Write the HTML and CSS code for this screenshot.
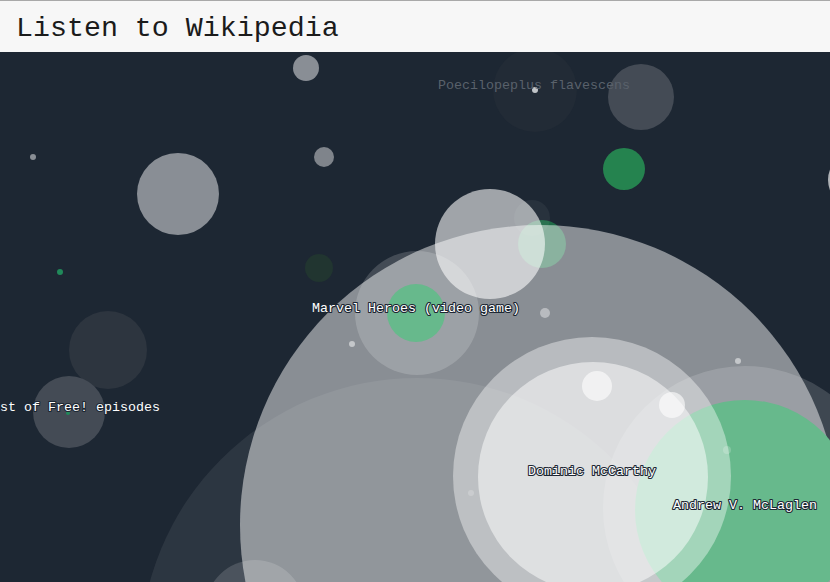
FILE: index.html
```html
<!DOCTYPE html>
<html>
<head>
<meta charset="utf-8">
<title>Listen to Wikipedia</title>
<link rel="stylesheet" href="styles.css">
</head>
<body>
<header class="topbar">
  <h1 class="title">Listen to Wikipedia</h1>
</header>
<main class="canvas">
  <svg class="bubbles" width="830" height="530" viewBox="0 52 830 530" xmlns="http://www.w3.org/2000/svg">
    <!-- faint / dark background circles -->
    <circle cx="535" cy="90" r="42" class="c-faint"/>
    <circle cx="641" cy="97" r="33" class="c-slate"/>
    <circle cx="108" cy="350" r="39" class="c-dim"/>
    <circle cx="69" cy="412" r="36" class="c-slate"/>
    <circle cx="319" cy="268" r="14" class="c-darkgreen"/>
    <circle cx="306" cy="68" r="13" class="c-gray"/>
    <circle cx="324" cy="157" r="10" class="c-gray2"/>
    <circle cx="178" cy="194" r="41" class="c-gray"/>
    <circle cx="33" cy="157" r="3" class="c-gray"/>
    <circle cx="535" cy="90" r="3" class="c-dot"/>
    <circle cx="60" cy="272" r="3" class="c-green-dark"/>
    <circle cx="68" cy="413" r="2" class="c-green-dark"/>
    <circle cx="624" cy="169" r="21" class="c-green-mid"/>
    <circle cx="856" cy="180" r="28" class="c-gray3"/>

    <!-- big cluster -->
    <circle cx="542" cy="244" r="24" class="c-green-deep"/>
    <circle cx="532" cy="218" r="18" class="w05"/>
    <circle cx="540" cy="525" r="300" class="w48"/>
    <circle cx="417" cy="655" r="277" class="w07"/>
    <circle cx="490" cy="244" r="55" class="w58"/>
    <circle cx="417" cy="313" r="62" class="w17"/>
    <circle cx="416" cy="313" r="29" class="c-green"/>
    <circle cx="255" cy="610" r="50" class="w15"/>
    <circle cx="745" cy="508" r="142" class="w15"/>
    <circle cx="745" cy="510" r="110" class="c-green"/>
    <circle cx="592" cy="476" r="139" class="w40"/>
    <circle cx="593" cy="477" r="115" class="w50"/>
    <circle cx="597" cy="386" r="15" class="w60"/>
    <circle cx="672" cy="405" r="13" class="w60"/>
    <circle cx="545" cy="313" r="5" class="w40"/>
    <circle cx="352" cy="344" r="3" class="w50"/>
    <circle cx="738" cy="361" r="3" class="w50"/>
    <circle cx="471" cy="493" r="3" class="w20"/>
    <circle cx="727" cy="450" r="4" class="w20"/>

    <!-- labels -->
    <text x="438" y="89" class="label label-faint">Poecilopeplus flavescens</text>
    <text x="312" y="312" class="label">Marvel Heroes (video game)</text>
    <text x="-16" y="411" class="label">List of Free! episodes</text>
    <text x="528" y="475" class="label">Dominic McCarthy</text>
    <text x="673" y="509" class="label">Andrew V. McLaglen</text>
  </svg>
</main>
</body>
</html>
```

FILE: styles.css
```css
html, body {
  margin: 0;
  padding: 0;
  background: #1d2733;
  overflow: hidden;
}

.topbar {
  border-top: 1px solid #a9a9a9;
  height: 51px;
  background: #f7f7f7;
  box-sizing: content-box;
}

.title {
  margin: 0;
  padding: 4px 0 0 16px;
  font-family: "Liberation Mono", "DejaVu Sans Mono", monospace;
  font-weight: normal;
  font-size: 28.3px;
  line-height: 47px;
  color: #1b1b1b;
}

.canvas {
  display: block;
  height: 530px;
  overflow: hidden;
  background: #1d2733;
}

.bubbles {
  display: block;
}

.c-faint { fill: #222b36; }
.c-slate { fill: #444b55; }
.c-dim { fill: #2d353f; }
.c-darkgreen { fill: #213530; }
.c-gray { fill: #898e95; }
.c-gray2 { fill: #7f848b; }
.c-gray3 { fill: #b0b3b7; }
.c-dot { fill: #c0c4c8; }
.c-green-dark { fill: #20895a; }
.c-green-mid { fill: #25834f; }
.c-green-deep { fill: #1f6b47; }
.c-green { fill: #67b98c; }

.w05 { fill: #ffffff; fill-opacity: 0.05; }
.w07 { fill: #ffffff; fill-opacity: 0.07; }
.w15 { fill: #ffffff; fill-opacity: 0.15; }
.w17 { fill: #ffffff; fill-opacity: 0.17; }
.w20 { fill: #ffffff; fill-opacity: 0.2; }
.w40 { fill: #ffffff; fill-opacity: 0.4; }
.w48 { fill: #ffffff; fill-opacity: 0.48; }
.w50 { fill: #ffffff; fill-opacity: 0.5; }
.w58 { fill: #ffffff; fill-opacity: 0.58; }
.w60 { fill: #ffffff; fill-opacity: 0.6; }

.label {
  font-family: "Liberation Mono", "DejaVu Sans Mono", monospace;
  font-size: 13.33px;
  fill: #ffffff;
  stroke: #1d2733;
  stroke-width: 2.2px;
  paint-order: stroke;
  stroke-linejoin: round;
}

.label-faint {
  fill: #59616b;
  stroke: none;
}
```
